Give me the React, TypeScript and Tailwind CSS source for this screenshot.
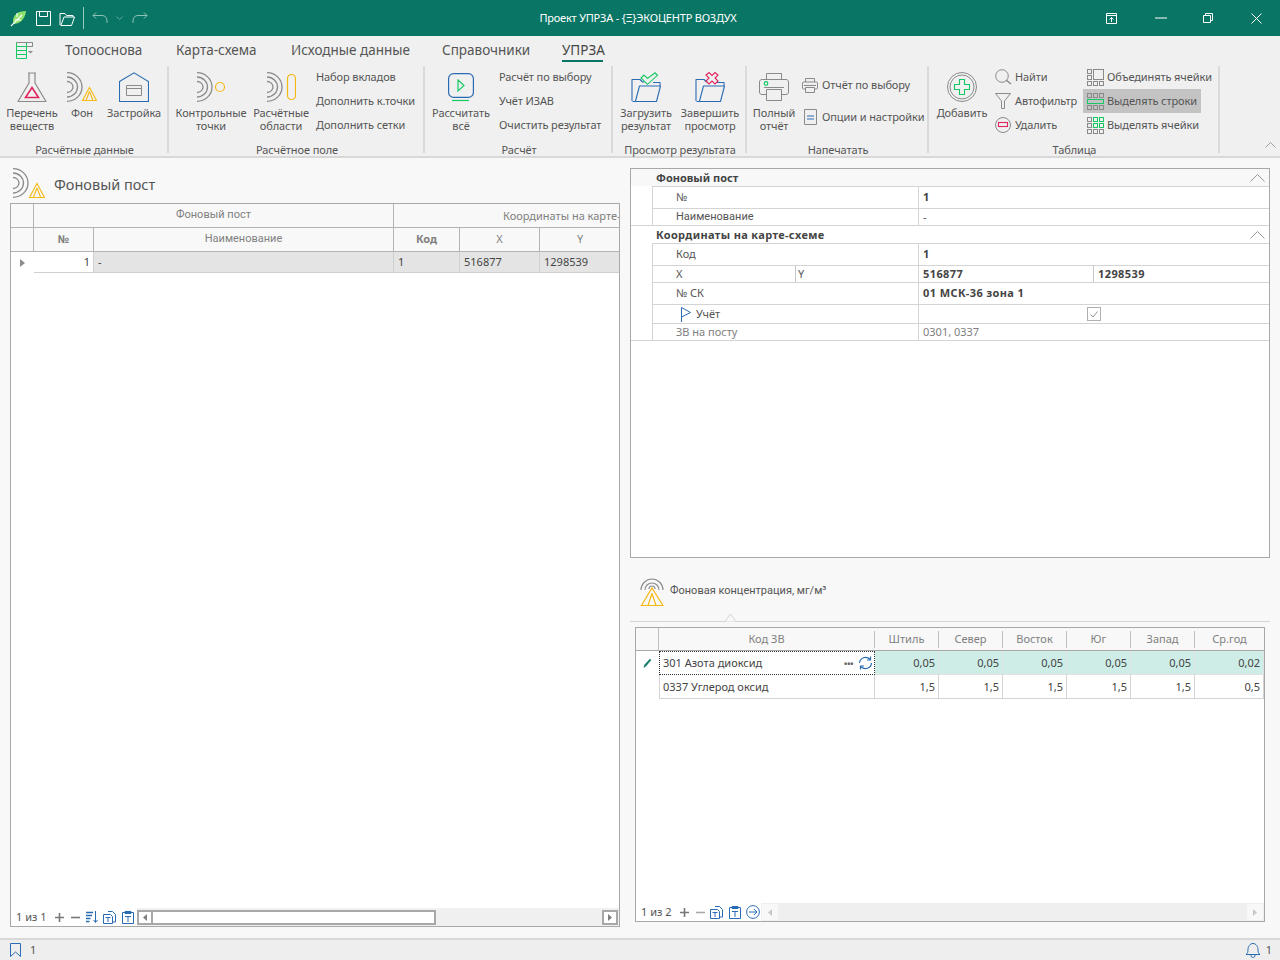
import type { ReactNode } from "react";

const gray = "#8a8a8a";
const blue = "#2a6cb3";
const green = "#17c964";
const red = "#e0245e";
const yellow = "#f5b914";

function Svg({ w, h, children, className = "" }: { w: number; h: number; children: ReactNode; className?: string }) {
  return (
    <svg width={w} height={h} viewBox={`0 0 ${w} ${h}`} fill="none" className={`block shrink-0 ${className}`}>
      {children}
    </svg>
  );
}

const Waves = ({ color = gray }: { color?: string }) => (
  <g stroke={color} strokeWidth="1.3">
    <path d="M0 .7a15 14.300 0 0 1 0 28.600" />
    <path d="M0 5a10.500 10 0 0 1 0 20" />
    <path d="M0 9.500a6 5.500 0 0 1 0 11" />
  </g>
);

/* ---------- title bar ---------- */
function TitleBar() {
  return (
    <div className="h-9 shrink-0 bg-[#097565] grid grid-cols-[1fr_auto_1fr] items-center text-white">
      <div className="flex items-center pl-[10px]">
        <Svg w={17} h={17}>
          <path d="M16 1C8 1 3 5 3 11c0 1 .3 2 .6 3C9 14 15 10 16 1Z" fill="#8fe36b" />
          <path d="M1 16 12 5M5 10h6M7 7V3" stroke="#fff" strokeWidth="1.1" />
        </Svg>
        <Svg w={15} h={15} className="ml-[9px]">
          <path d="M.5.5h14v14H.5zM3.5.5v5h8v-5" stroke="#fff" />
        </Svg>
        <Svg w={17} h={15} className="ml-[8px]">
          <path d="M1 14V2.500h5l1.500 2H14V6M1.500 14.500h11l3-8.500H5L2 14" stroke="#fff" strokeLinejoin="round" />
        </Svg>
        <div className="ml-[7px] w-px h-[22px] bg-white/60" />
        <Svg w={16} h={12} className="ml-[8px]">
          <path d="M1 3.500h9c3 0 5 2 5 5.500v2M1 3.500 4 .5M1 3.500l3 3" stroke="#8fc2b9" />
        </Svg>
        <Svg w={7} h={4} className="ml-[8px]">
          <path d="m.5.5 3 3 3-3" stroke="#5da89b" />
        </Svg>
        <Svg w={16} h={12} className="ml-[9px]">
          <path d="M15 3.500H6c-3 0-5 2-5 5.500v2M15 3.500l-3-3M15 3.500l-3 3" stroke="#8fc2b9" />
        </Svg>
      </div>
      <div className="text-[11px] leading-none pr-[4px] tracking-[-0.2px] -mt-[1px]">Проект УПРЗА - {"{Ξ}"}ЭКОЦЕНТР ВОЗДУХ</div>
      <div className="flex items-center justify-end pr-[18px]">
        <Svg w={11} h={11}>
          <path d="M.5.5h10v10H.5zM.5 2.500h10M5.500 9V4.500M3.500 6.500l2-2 2 2" stroke="#fff" />
        </Svg>
        <Svg w={12} h={2} className="ml-[38px]">
          <path d="M0 1h12" stroke="#fff" />
        </Svg>
        <Svg w={10} h={10} className="ml-[36px]">
          <path d="M.5 2.500h7v7h-7zM2.500 2.500v-2h7v7h-2" stroke="#fff" />
        </Svg>
        <Svg w={11} h={11} className="ml-[38px]">
          <path d="m.5.5 10 10M10.500.5l-10 10" stroke="#fff" />
        </Svg>
      </div>
    </div>
  );
}

/* ---------- tabs ---------- */
function Tabs() {
  const tabs = [
    { name: "Топооснова", cls: "w-[111px]" },
    { name: "Карта-схема", cls: "w-[115px]" },
    { name: "Исходные данные", cls: "w-[151px]" },
    { name: "Справочники", cls: "w-[120px]" },
  ];
  return (
    <div className="h-[30px] shrink-0 bg-[#f0f0f0] flex items-start pl-[16px] text-[13.5px] text-[#555] leading-[28px]">
      <Svg w={18} h={18} className="mt-[6px] mr-[31px]">
        <path d="M.5.5h16v4H8M.5.5v16h10V.5M.5 4.500h10M.5 8.500h10M.5 12.500h10" stroke={green} />
        <path d="M.5.5h16v4H11" stroke={gray} />
        <path d="m12 9 2.500 2.500L17 9z" fill={gray} />
      </Svg>
      {tabs.map((t) => (
        <div key={t.name} className={t.cls}>{t.name}</div>
      ))}
      <div className="w-[41px] h-[26px] border-b-2 border-[#097565] text-[#444] text-center">УПРЗА</div>
    </div>
  );
}

/* ---------- ribbon ---------- */
function Group({ w, label, children, pad = "" }: { w: string; label: string; children: ReactNode; pad?: string }) {
  return (
    <div className={`${w} shrink-0 h-[90px] relative flex flex-col`}>
      <div className={`h-[77px] flex ${pad}`}>{children}</div>
      <div className="h-[13px] text-center leading-[13px]">{label}</div>
      <div className="absolute right-0 top-0 h-[87px] w-[2px] bg-[#dadada]" />
    </div>
  );
}

function Big({ w, icon, label }: { w: string; icon: ReactNode; label: ReactNode }) {
  return (
    <div className={`${w} shrink-0 flex flex-col items-center`}>
      <div className="h-[34px] mt-[4px] flex items-center justify-center">{icon}</div>
      <div className="mt-[2px] text-center leading-[13px]">{label}</div>
    </div>
  );
}

function SmallList({ items, cls = "" }: { items: string[]; cls?: string }) {
  return (
    <div className={`flex flex-col ${cls}`}>
      {items.map((s) => (
        <div key={s} className="h-[24px] leading-[22px] whitespace-nowrap">{s}</div>
      ))}
    </div>
  );
}

function IconRow({ icon, label, cls = "" }: { icon: ReactNode; label: string; cls?: string }) {
  return (
    <div className={`h-[24px] flex items-center whitespace-nowrap ${cls}`}>
      <div className="w-[20px] shrink-0 flex items-center">{icon}</div>
      <span>{label}</span>
    </div>
  );
}

const Flask = () => (
  <Svg w={30} h={31}>
    <path d="M11 1h8M12 1v10L1 29.500h28L18 11V1" stroke={gray} strokeWidth="1.2" strokeLinejoin="round" />
    <path d="M15 15.500 21.500 25.500h-13z" stroke={red} strokeWidth="1.6" />
  </Svg>
);
const Fon = () => (
  <Svg w={30} h={30}>
    <Waves />
    <path d="M22.500 15.500 29.500 28.500h-14zM22.500 19.500l3.500 9M22.500 19.500l-3.500 9" stroke={yellow} strokeWidth="1.1" />
  </Svg>
);
const House = () => (
  <Svg w={30} h={30}>
    <path d="M.5 9.500 15 .8l14.500 8.700v20H.5z" stroke={blue} strokeWidth="1.1" />
    <path d="M7.500 13.500h15v10h-15zM7.500 16.500h15" stroke={gray} />
  </Svg>
);
const Kt = () => (
  <Svg w={29} h={30}>
    <Waves />
    <circle cx="23" cy="15" r="4.500" stroke={yellow} strokeWidth="1.2" />
  </Svg>
);
const Areas = () => (
  <Svg w={29} h={30}>
    <Waves />
    <rect x="20.500" y="2.500" width="8" height="25" rx="4" stroke={yellow} strokeWidth="1.2" />
  </Svg>
);
const Play = () => (
  <Svg w={26} h={29}>
    <rect x=".6" y=".6" width="24.800" height="23.800" rx="5" stroke={blue} strokeWidth="1.2" />
    <path d="m10 7 6 5.500-6 5.500z" stroke={green} strokeWidth="1.2" />
    <path d="M4 27.500h17" stroke={green} strokeWidth="1.2" />
  </Svg>
);
const Folder = ({ mark }: { mark: "ok" | "x" }) => (
  <Svg w={31} h={31}>
    <path d="M1 29V7.500h8l2.500 2.500h2M22 10.500h7V14M1.500 29.500h24l4-15.500H8.500L4.500 29" stroke={blue} strokeWidth="1.1" strokeLinejoin="round" />
    {mark === "ok" ? (
      <path d="m10 6 3-3 3.500 3.500L24 .8l2.500 2.500-10 9z" stroke={green} strokeWidth="1.1" fill="#f0f0f0" />
    ) : (
      <path d="m11 3 3-2.500 3 3 3-3L23 3l-3 3 3 3-3 3-3-3-3 3-3-3 3-3z" stroke={red} strokeWidth="1.1" fill="#f0f0f0" />
    )}
  </Svg>
);
const Printer = () => (
  <Svg w={30} h={28}>
    <path d="M7.500 6.500v-6h15v6M7.500 21.500H3c-1.500 0-2.500-1-2.500-2.500V9c0-1.500 1-2.500 2.500-2.500h24c1.500 0 2.500 1 2.500 2.500v10c0 1.500-1 2.500-2.500 2.500h-4.500" stroke={gray} />
    <path d="M5 14.500h20M7.500 16.500h15v11h-15z" stroke={gray} />
    <circle cx="7" cy="10.500" r="1.800" stroke={green} strokeWidth="1.2" />
  </Svg>
);
const SmallPrinter = () => (
  <Svg w={16} h={15}>
    <path d="M3.500 4V.5h9V4M3.500 11H1.500C.8 11 .5 10.500.5 10V5c0-.7.5-1 1-1h13c.7 0 1 .5 1 1v5c0 .7-.5 1-1 1h-2M2 7.500h12M3.500 9.500h9v5h-9z" stroke={gray} />
  </Svg>
);
const SmallDoc = () => (
  <Svg w={13} h={16}>
    <path d="M.5.5h12v15H.5z" stroke={gray} />
    <path d="M3 7h7M3 10h7" stroke={blue} />
  </Svg>
);
const Plus = () => (
  <Svg w={30} h={30}>
    <circle cx="15" cy="15" r="14.500" stroke={gray} />
    <circle cx="15" cy="15" r="12" stroke={gray} />
    <path d="M12.500 7.500h5v5h5v5h-5v5h-5v-5h-5v-5h5z" stroke={green} strokeWidth="1.1" />
  </Svg>
);
const Search = () => (
  <Svg w={17} h={16}>
    <circle cx="7" cy="7" r="6.300" stroke={gray} />
    <path d="m11 11 5 4" stroke={gray} strokeWidth="1.6" />
  </Svg>
);
const Filter = () => (
  <Svg w={16} h={16}>
    <path d="M.5.5h15L9.500 8v7.500h-3V8z" stroke={gray} strokeLinejoin="round" />
  </Svg>
);
const Minus = () => (
  <Svg w={17} h={16}>
    <circle cx="8" cy="8" r="7.500" stroke={gray} />
    <rect x="3.500" y="5.500" width="9" height="4" stroke={red} strokeWidth="1.1" />
  </Svg>
);
const cellXs = [0.5, 6.5, 12.5];
const Cells = ({ mode }: { mode: "merge" | "rows" | "cells" }) => (
  <Svg w={17} h={17}>
    {cellXs.flatMap((y, r) =>
      cellXs.map((x, c) => {
        if (mode === "merge" && r < 2 && c > 0) return null;
        if (mode === "rows" && r === 1) return null;
        const on = mode === "cells" && r < 2 && c > 0;
        return <rect key={`${r}-${c}`} x={x} y={y} width="4" height="4" stroke={on ? green : gray} />;
      })
    )}
    {mode === "merge" && <rect x="6.500" y=".5" width="10" height="10" stroke={gray} />}
    {mode === "rows" && <rect x=".5" y="6.500" width="16" height="4" stroke={green} />}
  </Svg>
);

function Ribbon() {
  return (
    <div className="h-[92px] shrink-0 bg-[#f0f0f0] border-b-2 border-[#d8d8d8] relative flex items-start text-[11px] text-[#555] tracking-[-0.1px]">
      <Group w="w-[169px]" label="Расчётные данные" pad="pl-[6px]">
        <Big w="w-[52px]" icon={<Flask />} label={<>Перечень<br />веществ</>} />
        <Big w="w-[48px]" icon={<Fon />} label="Фон" />
        <Big w="w-[56px]" icon={<House />} label="Застройка" />
      </Group>
      <Group w="w-[256px]" label="Расчётное поле" pad="pl-[6px]">
        <Big w="w-[72px]" icon={<Kt />} label={<>Контрольные<br />точки</>} />
        <Big w="w-[68px]" icon={<Areas />} label={<>Расчётные<br />области</>} />
        <SmallList cls="ml-[1px]" items={["Набор вкладов", "Дополнить к.точки", "Дополнить сетки"]} />
      </Group>
      <Group w="w-[188px]" label="Расчёт">
        <Big w="w-[72px]" icon={<Play />} label={<>Рассчитать<br />всё</>} />
        <SmallList cls="ml-[2px]" items={["Расчёт по выбору", "Учёт ИЗАВ", "Очистить результат"]} />
      </Group>
      <Group w="w-[134px]" label="Просмотр результата">
        <Big w="w-[66px]" icon={<Folder mark="ok" />} label={<>Загрузить<br />результат</>} />
        <Big w="w-[62px]" icon={<Folder mark="x" />} label={<>Завершить<br />просмотр</>} />
      </Group>
      <Group w="w-[182px]" label="Напечатать">
        <Big w="w-[54px]" icon={<Printer />} label={<>Полный<br />отчёт</>} />
        <div className="pt-[7px] flex flex-col gap-[8px] ml-[1px]">
          <IconRow icon={<SmallPrinter />} label="Отчёт по выбору" />
          <IconRow icon={<span className="pl-[2px]"><SmallDoc /></span>} label="Опции и настройки" />
        </div>
      </Group>
      <Group w="w-[291px]" label="Таблица">
        <Big w="w-[66px]" icon={<Plus />} label="Добавить" />
        <div className="w-[88px] -mt-[1px]">
          <IconRow icon={<Search />} label="Найти" />
          <IconRow icon={<Filter />} label="Автофильтр" />
          <IconRow icon={<Minus />} label="Удалить" />
        </div>
        <div className="-mt-[1px]">
          <IconRow cls="pl-[4px]" icon={<Cells mode="merge" />} label="Объединять ячейки" />
          <IconRow cls="pl-[4px] bg-[#c3c3c3] w-[118px]" icon={<Cells mode="rows" />} label="Выделять строки" />
          <IconRow cls="pl-[4px]" icon={<Cells mode="cells" />} label="Выделять ячейки" />
        </div>
      </Group>
      <Svg w={11} h={6} className="absolute right-[4px] bottom-[8px]">
        <path d="m.5 5.500 5-5 5 5" stroke="#a0a0a0" />
      </Svg>
    </div>
  );
}

/* ---------- left grid ---------- */
const ColsLeft = "grid grid-cols-[23px_60px_300px_66px_80px_81px]";
const head = "border-r border-b border-[#b4b4b4] flex items-center justify-center text-[#808080] text-[11px]";

function LeftPanel() {
  return (
    <div className="w-[610px] shrink-0 flex flex-col">
      <div className="h-[35px] shrink-0 flex items-start pl-[3px]">
        <Svg w={32} h={30}>
          <Waves />
          <path d="M24 15.500 31.500 29.500h-15zM24 20l3.500 9M24 20l-3.500 9" stroke={yellow} strokeWidth="1.1" />
        </Svg>
        <span className="ml-[9px] mt-[6px] text-[14.5px] leading-[20px] text-[#555]">Фоновый пост</span>
      </div>
      <div className="flex-1 border border-[#a8a8a8] bg-white flex flex-col overflow-hidden">
        <div className="flex-1 overflow-hidden">
          <div className="w-[640px]">
            <div className="grid grid-cols-[23px_360px_257px] h-[23px]">
              <div className="border-r border-b border-[#b4b4b4] bg-[#f8f8f8]" />
              <div className={`${head} bg-[#f8f8f8] font-['Roboto',sans-serif]`}>Фоновый пост</div>
              <div className="border-b border-[#b4b4b4] bg-[#f8f8f8] text-[#808080] pl-[109px] leading-[23px] whitespace-nowrap text-[11px]">Координаты на карте-схеме</div>
            </div>
            <div className={`${ColsLeft} h-[25px] bg-[#f8f8f8]`}>
              <div className={head} />
              <div className={`${head} font-bold`}>№</div>
              <div className={`${head} font-['Roboto',sans-serif]`}>Наименование</div>
              <div className={`${head} font-bold`}>Код</div>
              <div className={head}>X</div>
              <div className={head}>Y</div>
            </div>
            <div className={`${ColsLeft} h-[21px] text-[11px] text-[#444] leading-[20px]`}>
              <div className="flex items-center justify-center">
                <svg width="5" height="8" viewBox="0 0 5 8"><path d="M0 0l5 4-5 4z" fill="#8c8c8c" /></svg>
              </div>
              <div className="border-r border-b border-[#d0d0d0] text-right pr-[3px]">1</div>
              <div className="border-r border-b border-[#d0d0d0] bg-[#e4e4e4] pl-[4px]">-</div>
              <div className="border-r border-b border-[#d0d0d0] bg-[#e4e4e4] pl-[4px]">1</div>
              <div className="border-r border-b border-[#d0d0d0] bg-[#e4e4e4] pl-[4px]">516877</div>
              <div className="border-b border-[#d0d0d0] bg-[#e4e4e4] pl-[4px]">1298539</div>
            </div>
          </div>
        </div>
        <div className="h-[18px] flex items-center text-[11px] text-[#555]">
          <span className="pl-[5px] w-[44px]">1 из 1</span>
          <Svg w={9} h={9}><path d="M4.500 0v9M0 4.500h9" stroke="#777" strokeWidth="1.6" /></Svg>
          <Svg w={9} h={9} className="ml-[7px]"><path d="M0 4.500h9" stroke="#777" strokeWidth="1.6" /></Svg>
          <Svg w={12} h={12} className="ml-[6px]">
            <path d="M0 1.500h7M0 4.500h6M0 7.500h4.500M0 10.500h3.500" stroke={blue} strokeWidth="1.6" />
            <path d="M9.500 0v11M7.500 9l2 2.500 2-2.500" stroke={blue} />
          </Svg>
          <CopyIcon cls="ml-[5px]" />
          <PasteIcon cls="ml-[6px]" />
          <div className="ml-[3px] flex-1 h-[18px] bg-[#f0f0f0] flex items-center pr-[1px]">
            <div className="w-[16px] h-[15px] bg-white border-2 border-[#a8a8a8] flex items-center justify-center">
              <svg width="4" height="7" viewBox="0 0 4 7"><path d="M4 0 0 3.500 4 7z" fill="#808080" /></svg>
            </div>
            <div className="w-[283px] h-[15px] bg-white border-2 border-l-0 border-[#a8a8a8]" />
            <div className="flex-1" />
            <div className="w-[16px] h-[15px] bg-white border-2 border-[#a8a8a8] flex items-center justify-center">
              <svg width="4" height="7" viewBox="0 0 4 7"><path d="M0 0l4 3.500L0 7z" fill="#808080" /></svg>
            </div>
          </div>
        </div>
      </div>
    </div>
  );
}

const CopyIcon = ({ cls = "" }: { cls?: string }) => (
  <Svg w={13} h={13} className={cls}>
    <path d="M5 .5h4.500l3 3v7.500H9.500M.5 3.500h7l2 2v7h-9zM2.500 6.500h5M5 6.500v4.500" stroke={blue} />
  </Svg>
);
const PasteIcon = ({ cls = "" }: { cls?: string }) => (
  <Svg w={12} h={13} className={cls}>
    <path d="M.5 1.500h11v11H.5zM3 .5h6v2H3zM3 5.500h6M6 5.500V11" stroke={blue} />
  </Svg>
);

/* ---------- property grid ---------- */
const Chevron = () => (
  <Svg w={15} h={8}><path d="m.5 7.500 7-7 7 7" stroke="#9a9a9a" /></Svg>
);

function GroupRow({ label, h, cls = "" }: { label: string; h: string; cls?: string }) {
  return (
    <div className={`${h} flex items-center justify-between pl-[25px] pr-[4px] pt-[1px] font-bold text-[#444] ${cls}`}>
      <span>{label}</span>
      <Chevron />
    </div>
  );
}

function PropRow({ h, label, value, bold = true, muted = false }: { h: string; label: ReactNode; value: ReactNode; bold?: boolean; muted?: boolean }) {
  return (
    <div className={`${h} ml-[21px] grid grid-cols-[267px_1fr] border-t border-[#d4d4d4] bg-white ${muted ? "text-[#808080]" : "text-[#555]"}`}>
      <div className="border-l border-r border-[#d4d4d4] pl-[23px] flex items-center">{label}</div>
      <div className={`pl-[4px] flex items-center ${bold ? "font-bold text-[#444] tracking-[0.4px]" : ""}`}>{value}</div>
    </div>
  );
}

function PropertyGrid() {
  return (
    <div className="h-[390px] shrink-0 border border-[#a8a8a8] bg-white text-[11px] flex flex-col">
      <div className="bg-[#f8f8f8]">
        <GroupRow h="h-[17px]" label="Фоновый пост" />
      </div>
      <PropRow h="h-[22px]" label="№" value="1" />
      <PropRow h="h-[17px]" label={<span className="font-['Roboto',sans-serif]">Наименование</span>} value="-" bold={false} />
      <div className="border-t border-[#d4d4d4]">
        <GroupRow h="h-[17px]" cls="tracking-[0.35px]" label="Координаты на карте-схеме" />
      </div>
      <PropRow h="h-[22px]" label="Код" value="1" />
      <PropRow
        h="h-[17px]"
        label={
          <div className="flex w-full">
            <span className="w-[120px] border-r border-[#c8c8c8] mr-[2px]">X</span>
            <span>Y</span>
          </div>
        }
        value={
          <div className="flex w-full">
            <span className="w-[171px] border-r border-[#c8c8c8] mr-[4px]">516877</span>
            <span>1298539</span>
          </div>
        }
      />
      <PropRow h="h-[22px]" label="№ СК" value="01 МСК-36 зона 1" />
      <PropRow
        h="h-[19px]"
        label={
          <div className="flex items-center ml-[5px]">
            <Svg w={11} h={15}><path d="M.5 15V.5l9 5-9 4.500" stroke={blue} /></Svg>
            <span className="ml-[4px]">Учёт</span>
          </div>
        }
        bold={false}
        value={
          <div className="w-full flex justify-center pr-[4px]">
            <div className="w-[14px] h-[14px] border border-[#b0b0b0] flex items-center justify-center">
              <Svg w={8} h={7}><path d="m.5 3.500 2.500 2.500 4.500-5.500" stroke="#909090" /></Svg>
            </div>
          </div>
        }
      />
      <PropRow h="h-[17px]" label="ЗВ на посту" value="0301, 0337" bold={false} muted />
      <div className="border-t border-[#d4d4d4]" />
    </div>
  );
}

/* ---------- concentration table ---------- */
const ColsRight = "grid grid-cols-[23px_216px_64px_64px_64px_64px_64px_69px]";
const winds = ["Штиль", "Север", "Восток", "Юг", "Запад", "Ср.год"];
const row1 = ["0,05", "0,05", "0,05", "0,05", "0,05", "0,02"];
const row2 = ["1,5", "1,5", "1,5", "1,5", "1,5", "0,5"];

function ConcTable() {
  return (
    <div className="flex-1 ml-[5px] mr-[5px] border border-[#a8a8a8] bg-white flex flex-col text-[11px]">
      <div className="flex-1">
        <div className={`${ColsRight} h-[23px] bg-[#f8f8f8] border-b border-[#a8a8a8] text-[#808080]`}>
          <div className="border-r border-[#c0c0c0]" />
          <div className="flex items-center justify-center border-r border-[#c0c0c0] my-[3px]">Код ЗВ</div>
          {winds.map((w, i) => (
            <div key={w} className={`flex items-center justify-center my-[3px] ${i < 5 ? "border-r border-[#c0c0c0]" : ""}`}>{w}</div>
          ))}
        </div>
        <div className={`${ColsRight} h-[24px] text-[#444]`}>
          <div className="flex items-center justify-center">
            <Svg w={9} h={9}><path d="M8 1 3 7 1 8.500l.5-2.500 5.500-6z" fill="#0d7a66" stroke="#0d7a66" strokeWidth=".5" /></Svg>
          </div>
          <div className="border border-dotted border-[#333] flex items-center justify-between pl-[3px] pr-[1px]">
            <span>301 Азота диоксид</span>
            <div className="flex items-center">
              <span className="text-[#666] tracking-[-1px] mr-[5px] leading-none">•••</span>
              <Svg w={15} h={14}>
                <path d="M1.500 7A6 6 0 0 1 12 3.500M13.500 7A6 6 0 0 1 3 10.500" stroke={blue} strokeWidth="1.2" />
                <path d="M12.500.5v3.500H9M2.500 13.500V10H6" stroke={blue} strokeWidth="1.2" />
              </Svg>
            </div>
          </div>
          {row1.map((v, i) => (
            <div key={i} className="bg-[#ceede7] border-b border-r border-[#e2e2e2] text-right pr-[3px] leading-[23px]">{v}</div>
          ))}
        </div>
        <div className={`${ColsRight} h-[24px] text-[#444]`}>
          <div />
          <div className="border-l border-r border-b border-[#d4d4d4] pl-[3px] leading-[23px]">0337 Углерод оксид</div>
          {row2.map((v, i) => (
            <div key={i} className="border-b border-r border-[#d4d4d4] text-right pr-[3px] leading-[23px]">{v}</div>
          ))}
        </div>
      </div>
      <div className="h-[18px] flex items-center text-[#555]">
        <span className="pl-[5px] w-[44px]">1 из 2</span>
        <Svg w={9} h={9}><path d="M4.500 0v9M0 4.500h9" stroke="#777" strokeWidth="1.6" /></Svg>
        <Svg w={9} h={9} className="ml-[7px]"><path d="M0 4.500h9" stroke="#aaa" strokeWidth="1.6" /></Svg>
        <CopyIcon cls="ml-[5px]" />
        <PasteIcon cls="ml-[6px]" />
        <Svg w={14} h={14} className="ml-[5px]">
          <circle cx="7" cy="7" r="6.400" stroke={blue} />
          <path d="M3 7h8M8 4l3 3-3 3" stroke={blue} />
        </Svg>
        <div className="ml-[1px] flex-1 h-[18px] bg-[#efefef] flex items-center justify-between px-[1px]">
          <div className="w-[16px] h-[16px] bg-[#f8f8f8] flex items-center justify-center">
            <svg width="4" height="7" viewBox="0 0 4 7"><path d="M4 0 0 3.500 4 7z" fill="#c8c8c8" /></svg>
          </div>
          <div className="w-[16px] h-[16px] bg-[#f8f8f8] flex items-center justify-center">
            <svg width="4" height="7" viewBox="0 0 4 7"><path d="M0 0l4 3.500L0 7z" fill="#c8c8c8" /></svg>
          </div>
        </div>
      </div>
    </div>
  );
}

function RightPanel() {
  return (
    <div className="w-[640px] shrink-0 ml-[10px] flex flex-col pb-[5px]">
      <PropertyGrid />
      <div className="h-[69px] shrink-0 relative flex items-start pl-[10px] pt-[20px]">
        <Svg w={24} h={28}>
          <path d="M1 12C1 6 6 1 12 1s11 5 11 11M5 12c0-4 3-7 7-7s7 3 7 7M9 11c0-2 1-3 3-3s3 1 3 3" stroke={gray} strokeWidth="1.1" />
          <path d="M12 10 23 27.500H1.500zM12 15.500 8 27.500M12 15.500l4 12" stroke={yellow} strokeWidth="1.2" />
        </Svg>
        <span className="ml-[6px] mt-[5px] text-[11px] leading-[16px] text-[#555] font-['Roboto',sans-serif]">Фоновая концентрация, мг/м³</span>
        <div className="absolute left-0 right-0 bottom-[5px] h-px bg-[#d4d4d4]" />
        <Svg w={13} h={9} className="absolute left-[94px] bottom-[5px]">
          <path d="M0 8.500h1L6.500 1 12 8.500h1" stroke="#d4d4d4" fill="#f8f8f8" />
        </Svg>
      </div>
      <ConcTable />
    </div>
  );
}

export default function App() {
  return (
    <div className="w-[1280px] h-[960px] overflow-hidden flex flex-col bg-[#f8f8f8] font-['Noto_Sans',sans-serif]">
      <TitleBar />
      <Tabs />
      <Ribbon />
      <div className="flex-1 min-h-0 flex pl-[10px] pt-[10px] pb-[11px]">
        <LeftPanel />
        <RightPanel />
      </div>
      <div className="h-[22px] shrink-0 border-t-2 border-[#d8d8d8] bg-[#eeeeee] flex items-center justify-between pl-[10px] pr-[8px] text-[11px] text-[#555]">
        <div className="flex items-center">
          <Svg w={11} h={14}><path d="M.5.5h10v13L5.500 9l-5 4.500z" stroke={blue} /></Svg>
          <span className="ml-[9px]">1</span>
        </div>
        <div className="flex items-center">
          <Svg w={16} h={16}>
            <path d="M1 12.500c1.500-1 2-2.500 2-5 0-3 2-6 5-6s5 3 5 6c0 2.500.5 4 2 5zM6 13c0 2 1 2.500 2 2.500S10 15 10 13" stroke={blue} />
          </Svg>
          <span className="ml-[5px]">1</span>
        </div>
      </div>
    </div>
  );
}
